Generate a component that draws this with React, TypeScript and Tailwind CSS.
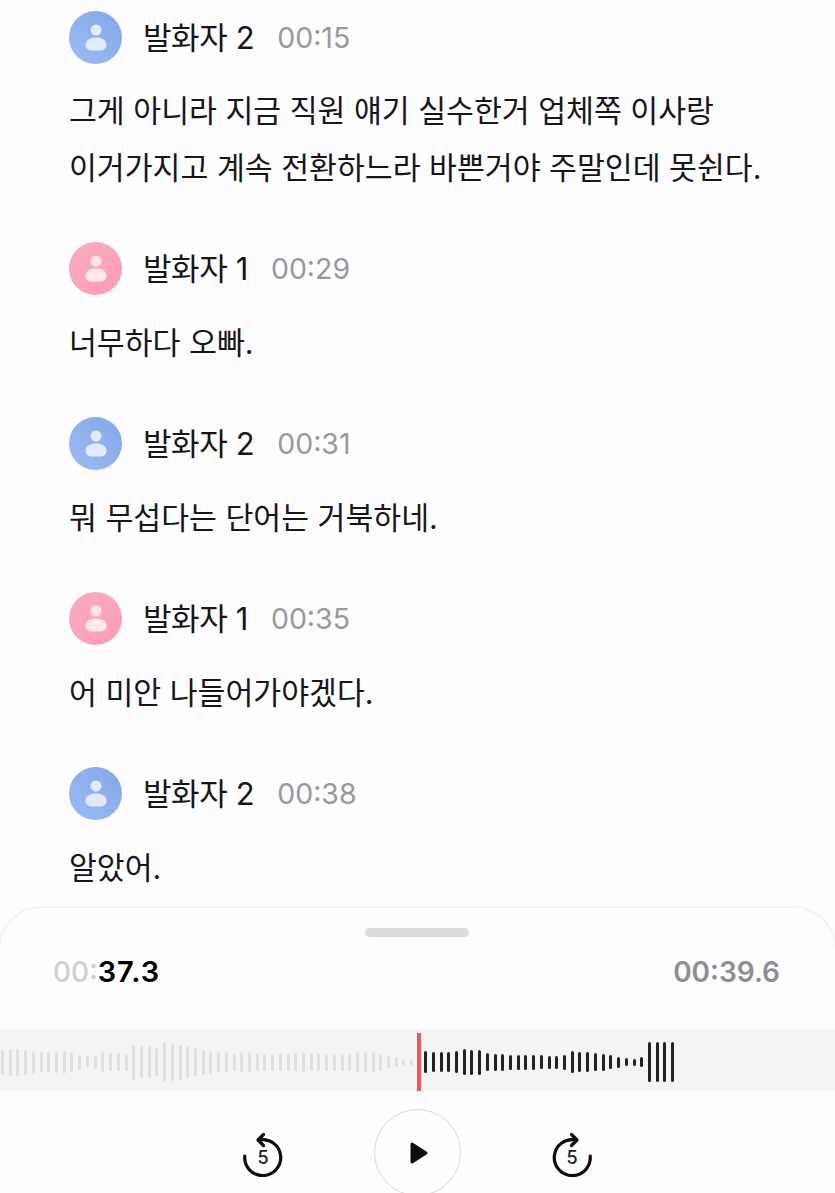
const entries = [
  { speaker: 2, time: '00:15', lines: ['그게 아니라 지금 직원 얘기 실수한거 업체쪽 이사랑', '이거가지고 계속 전환하느라 바쁜거야 주말인데 못쉰다.'] },
  { speaker: 1, time: '00:29', lines: ['너무하다 오빠.'] },
  { speaker: 2, time: '00:31', lines: ['뭐 무섭다는 단어는 거북하네.'] },
  { speaker: 1, time: '00:35', lines: ['어 미안 나들어가야겠다.'] },
  { speaker: 2, time: '00:38', lines: ['알았어.'] },
]

const playedBars = [25, 27, 27, 25, 23, 20, 20, 22, 22, 20, 15, 12, 13, 20, 18, 18, 17, 35, 32, 32, 28, 40, 38, 35, 32, 28, 25, 23, 20, 20, 17, 20, 20, 18, 17, 17, 18, 17, 18, 20, 18, 18, 17, 17, 17, 17, 20, 20, 20, 17, 12, 10, 7, 7]
const restBars = [22, 20, 20, 20, 22, 26, 25, 25, 18, 17, 17, 15, 15, 15, 15, 14, 13, 13, 15, 22, 20, 20, 18, 17, 14, 11, 8, 7, 10, 40, 40, 40, 40]

function Avatar({ speaker }: { speaker: number }) {
  const bg = speaker === 1 ? 'bg-gradient-to-br from-[#f9adc0] to-[#fb9cb3]' : 'bg-gradient-to-bl from-[#84a7e8] to-[#9dbbf2]'
  const fg = speaker === 1 ? '#fde6ec' : '#e2ebfb'
  return (
    <div className={`w-[53px] h-[53px] rounded-full flex items-center justify-center ${bg}`}>
      <svg width="22" height="27" viewBox="0 0 22 27">
        <circle cx="11" cy="6" r="5.500" fill={fg} />
        <path d="M0.500 21c0-5 4.500-7.500 10.500-7.500S21.500 16 21.500 21c0 3.500-3 5.500-6.500 5.500H7c-3.500 0-6.500-2-6.500-5.500z" fill={fg} />
      </svg>
    </div>
  )
}

function SkipIcon({ flip }: { flip?: boolean }) {
  return (
    <svg width="44" height="46" viewBox="0 0 44 46">
      <g className={flip ? '-scale-x-100 origin-center' : ''} fill="none" stroke="#0c0c0c" strokeWidth="3.200" strokeLinecap="round" strokeLinejoin="round">
        <path d="M18 9 A18 18 0 1 1 3.800 25" />
        <path d="M22.500 3.500 L17 9 L22.500 14.500" />
      </g>
      <text x="22" y="33" textAnchor="middle" fontSize="18" fontWeight="500" fill="#222" fontFamily="Inter, sans-serif">5</text>
    </svg>
  )
}

export default function App() {
  return (
    <div className="w-[835px] h-[1193px] overflow-hidden flex flex-col bg-[#fdfcff] font-['Inter','Noto_Sans_CJK_KR',sans-serif] text-[#161618]">
      <div className="flex-1 min-h-0 pt-[11px] pl-[69px] flex flex-col gap-[45px]">
        {entries.map((entry, index) => (
          <div key={entry.time}>
            <div className="h-[53px] flex items-center">
              <Avatar speaker={entry.speaker} />
              <span className="ml-[21px] pt-[1px] text-[31px] tracking-[-0.4px]">발화자 {entry.speaker}</span>
              <span className="ml-[23px] pt-[1px] text-[28.500px] text-[#99999c]">{entry.time}</span>
            </div>
            <div className={`${index === 0 ? 'mt-[19px]' : 'mt-[20px]'} text-[30.300px] leading-[57px]`}>
              {entry.lines.map((line) => (
                <div key={line} className="whitespace-nowrap">{line}</div>
              ))}
            </div>
          </div>
        ))}
      </div>

      <div className="h-[287px] shrink-0 bg-[#fdfcff] rounded-t-[44px] border-t-2 border-x-2 border-[#f3f3f5] -mx-[2px] flex flex-col">
        <div className="mt-[20px] -ml-[1px] w-[104px] h-[9px] shrink-0 rounded-full bg-[#dcdcde] self-center" />
        <div className="mt-[17px] pl-[53px] pr-[55px] h-[36px] shrink-0 flex items-center justify-between text-[28px] font-semibold">
          <span>
            <span className="text-[#cfcfd1] font-medium">00:</span>
            <span className="text-black text-[29px] tracking-[1px]">37.3</span>
          </span>
          <span className="text-[#8e8e92]">00:39.6</span>
        </div>
        <div className="mt-[39px] h-[62px] shrink-0 bg-[#f4f4f6] flex items-center pt-[4px] pl-[1px]">
          <div className="flex items-center gap-[4.720px]">
            {playedBars.map((h, i) => (
              <div key={i} className="w-[3px] rounded-full bg-[#e0e0e2]" style={{ height: h }} />
            ))}
          </div>
          <div className="ml-[4px] w-[4px] h-[58px] self-end bg-[#ea5a57]" />
          <div className="ml-[3px] flex items-center gap-[4.720px]">
            {restBars.map((h, i) => (
              <div key={i} className="w-[3px] rounded-full bg-[#222224]" style={{ height: h }} />
            ))}
          </div>
        </div>
        <div className="mt-[18px] flex items-start justify-center">
          <div className="mt-[22px]"><SkipIcon /></div>
          <div className="mx-[89px] w-[87px] h-[87px] shrink-0 rounded-full border-[1.500px] border-[#d8d8da] flex items-center justify-center">
            <svg width="20" height="24" viewBox="0 0 20 24" className="ml-[2px]">
              <path d="M3 3 L17 12 L3 21 Z" fill="#0c0c0c" stroke="#0c0c0c" strokeWidth="3" strokeLinejoin="round" />
            </svg>
          </div>
          <div className="mt-[22px]"><SkipIcon flip /></div>
        </div>
      </div>
    </div>
  )
}
